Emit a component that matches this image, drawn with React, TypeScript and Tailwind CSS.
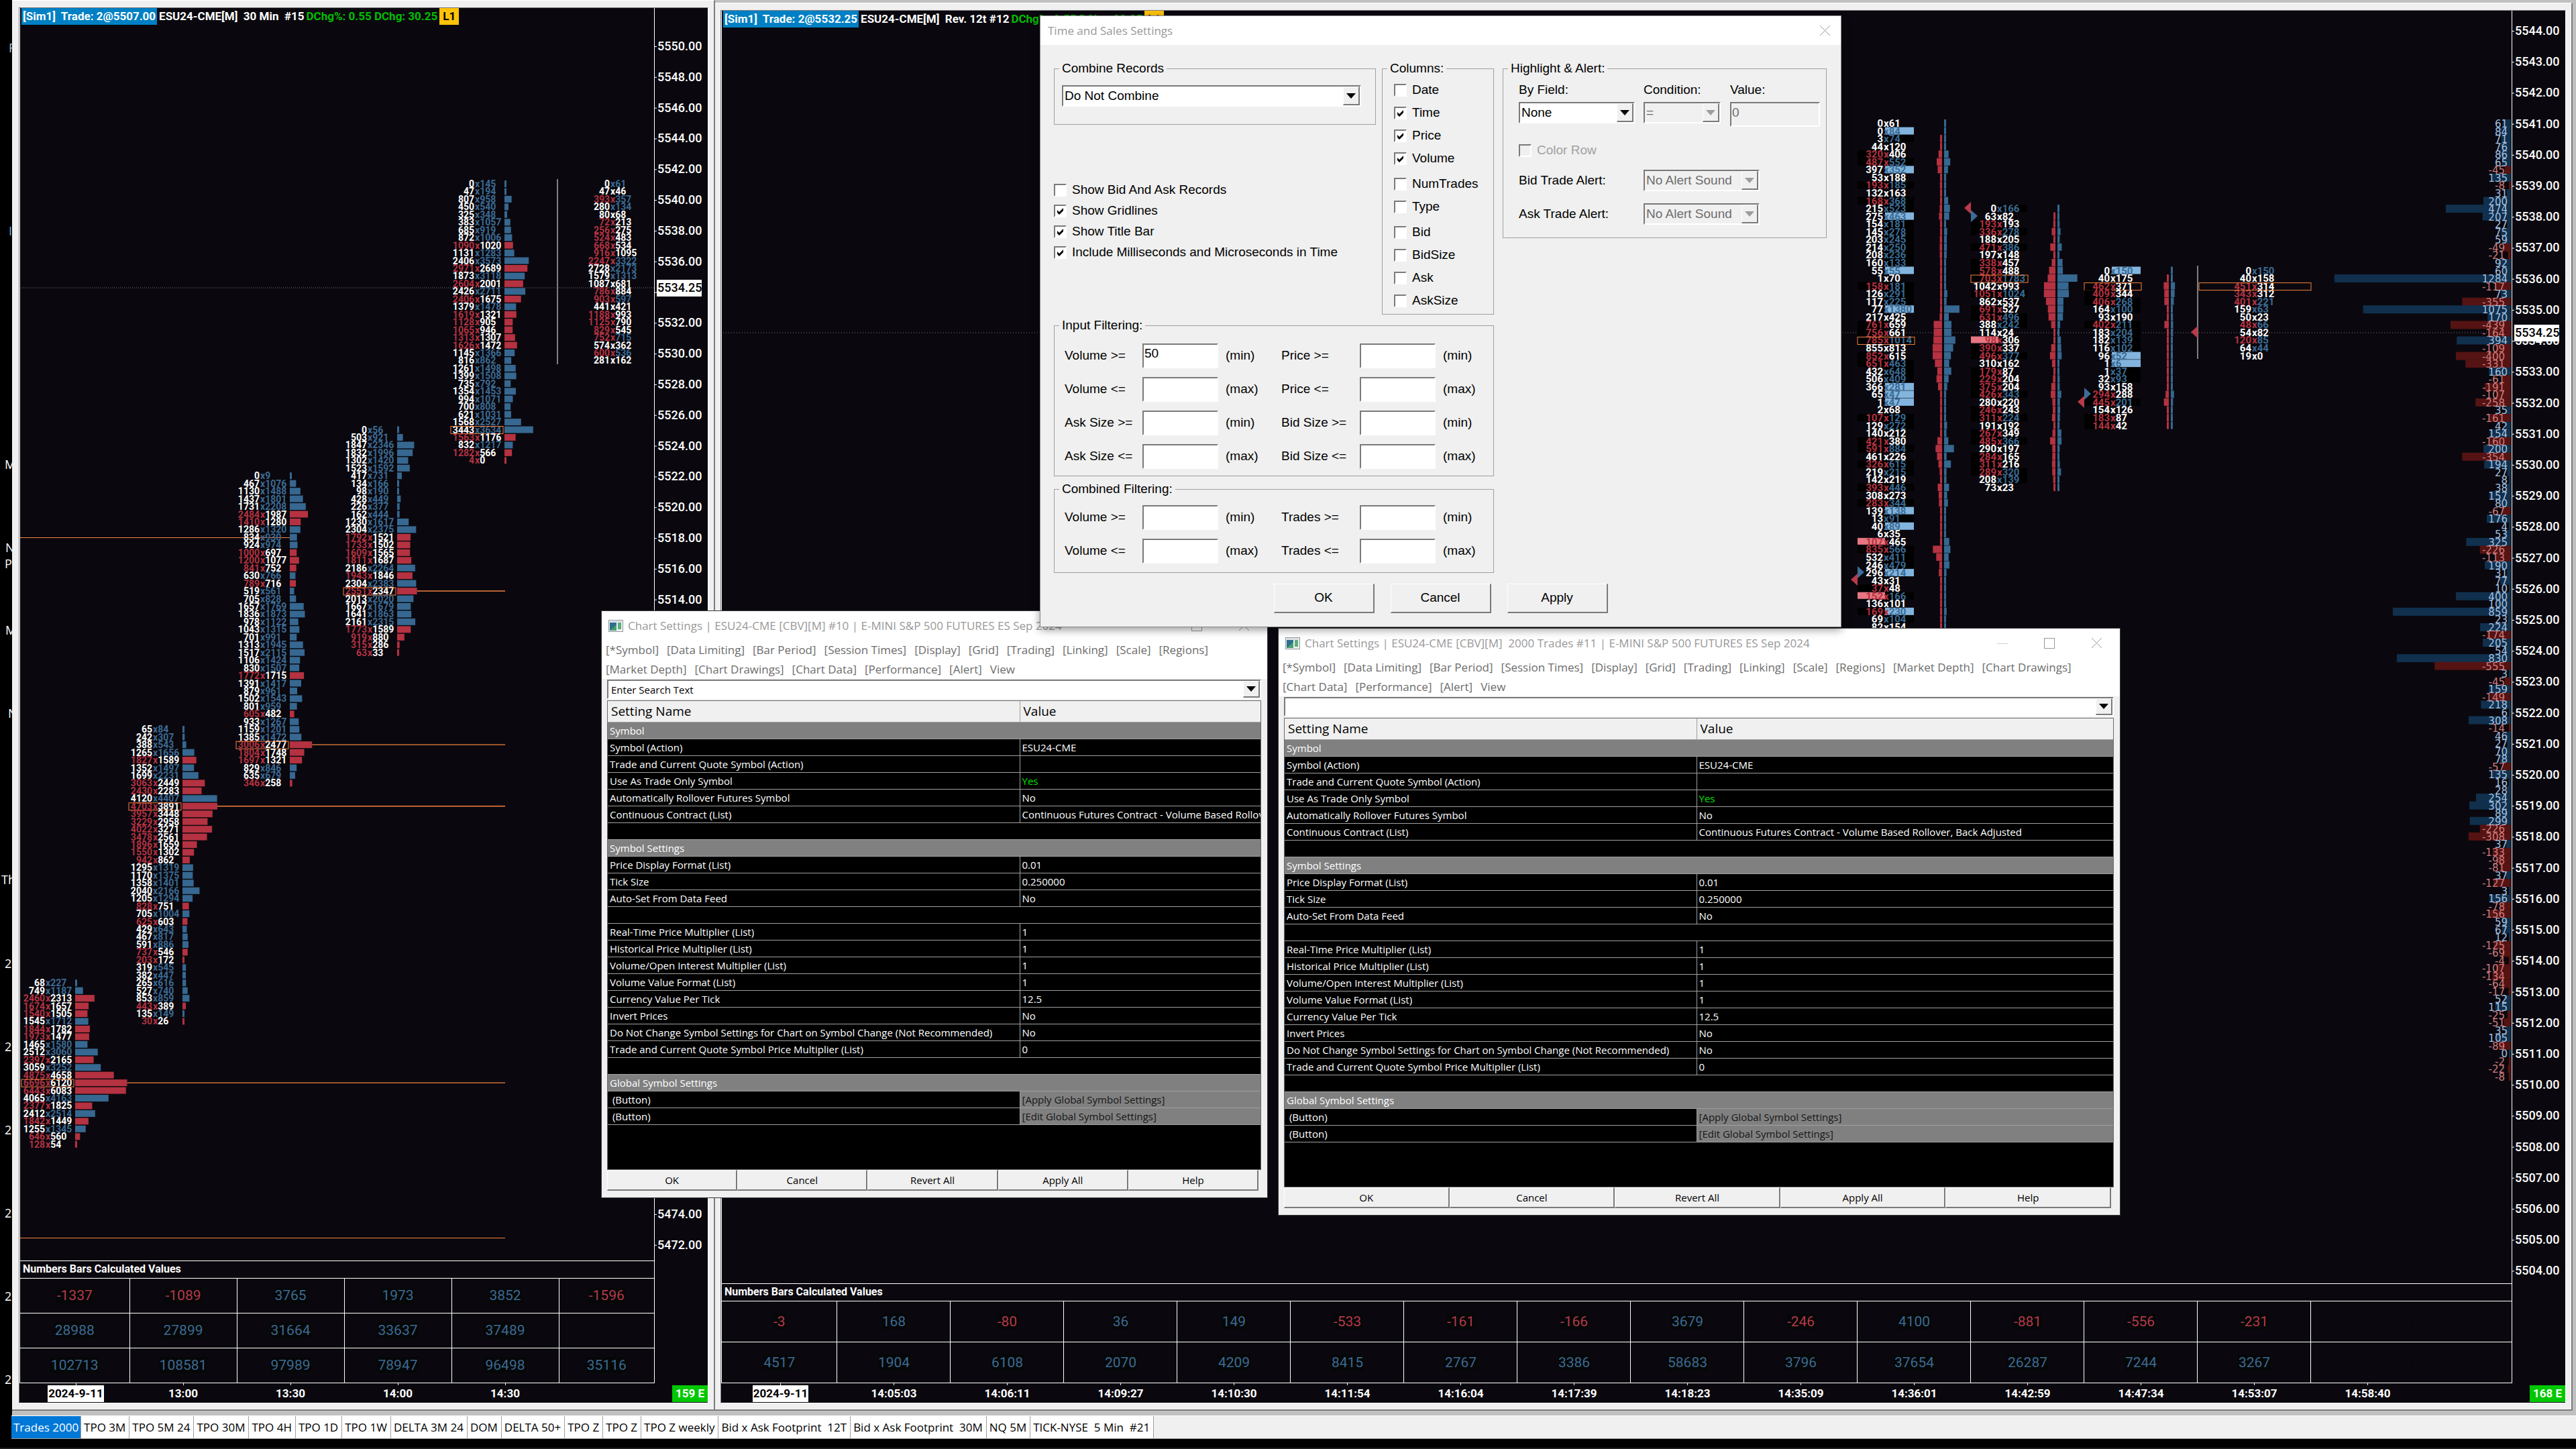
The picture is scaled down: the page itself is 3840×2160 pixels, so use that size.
import React from 'react';
import { clsx } from 'clsx';

// Row codes: w = both plain, b = ask coloured, r = bid coloured, m = both coloured,
// B / R = highlighted ask / bid, M = bid coloured + ask highlighted, N = bid highlighted + ask coloured
type Code = 'w' | 'b' | 'r' | 'm' | 'B' | 'R' | 'M' | 'N';

interface Row {
  code: Code;
  bid: number;
  ask: number;
}

interface Column {
  x: number;
  start: number;
  poc?: number;
  rows: Row[];
}

const RED = '#b43241';
const BLUE = '#3b6b94';
const ORANGE = '#f5813f';

const parseRows = (text: string): Row[] =>
  text
    .trim()
    .split(/\s+/)
    .map((item) => {
      const coded = /^[a-zA-Z]/.test(item);
      const [bid, ask] = (coded ? item.slice(1) : item).split('x').map(Number);
      const code = coded ? (item[0] as Code) : ask > bid ? 'b' : 'r';
      return { code, bid, ask };
    });

const range = (from: number, to: number, step: number) => {
  const out: number[] = [];
  for (let p = from; p >= to; p -= step) out.push(p);
  return out;
};

/* ---------- 30 minute chart ---------- */

const LEFT_PITCH = 11.454;
const LEFT_TOP = 262;
const LINE_END = 723;

const leftColumns: Column[] = [
  {
    x: 722,
    start: 0,
    poc: 32,
    rows: parseRows(`0x145 47x194 807x958 450x540 325x348 383x1057 685x919 872x1006 1090x1020 1131x1283 2406x3573
      2971x2689 1873x3118 2604x2001 2426x2711 2406x1675 1379x1478 1619x1321 1128x905 1065x946 1313x1307 1626x1472
      1145x1366 816x862 1261x1498 1399x1508 735x792 1354x1453 994x1071 700x808 621x1031 1568x2527 3443x3634
      1563x1176 832x1217 1282x566 4x0`),
  },
  {
    x: 562,
    start: 32,
    poc: 21,
    rows: parseRows(`0x56 503x921 1847x2346 1832x1996 1302x1420 1523x1592 417x731 134x166 98x190 428x449 226x377
      162x444 1230x1617 2304x2375 1792x1521 1733x1502 1609x1565 1811x1687 2186x2264 1943x1846 2304x2383 2551x2347
      2013x2020 1667x1679 1641x1863 2161x2315 1773x1589 919x880 315x286 63x33`),
  },
  {
    x: 402,
    start: 38,
    poc: 35,
    rows: parseRows(`0x9 467x1076 1130x1488 1437x1801 1731x2208 2484x1987 1410x1280 1286x1320 834x930 924x974
      1000x697 1200x1077 841x752 630x766 789x716 519x561 705x828 1657x1769 1836x1873 978x1122 1043x1315 701x991
      1313x1945 1517x2115 1106x1424 830x1507 1772x1715 1391x1417 879x961 1502x1543 801x959 605x482 933x1267
      1159x1201 1385x1472 3006x2477 1804x1748 1697x1321 829x846 635x679 346x258`),
  },
  {
    x: 242,
    start: 71,
    poc: 10,
    rows: parseRows(`65x84 242x307 388x543 1265x1656 1827x1589 1352x1497 1699x2231 3063x2449 2430x2283 4120x4407
      4703x3891 3957x3448 3229x2958 4022x3271 3478x2561 1896x1659 1550x1302 942x862 1295x1319 1170x1375 1358x1401
      2040x2166 1205x1294 828x751 705x1004 625x603 429x643 467x817 591x886 737x546 203x172 319x545 382x447 265x616
      527x740 853x859 443x389 135x149 30x26`),
  },
  {
    x: 82,
    start: 104,
    poc: 13,
    rows: parseRows(`68x227 749x1187 2460x2313 1674x1657 1540x1505 1545x1712 1844x1782 1973x1477 1465x1580
      2512x3060 2397x2165 3059x3252 4875x4658 6696x6120 6443x6083 4065x4163 2377x1825 2412x2514 1842x1449
      1255x1345 646x560 128x54`),
  },
];

const leftCurrent = parseRows(`b0x61 w47x46 m393x357 b280x134 w80x68 r72x213 r256x275 r524x483 r668x534 r916x1095
  m2247x3322 b2728x2173 b1579x1313 w1087x681 r786x884 m903x597 w441x421 r1188x993 r1125x790 r829x545 m752x715
  w574x362 m600x536 w281x162`);

/* ---------- Reversal chart ---------- */

const RIGHT_PITCH = 11.553;
const RIGHT_TOP = 168;

const rightColumns: Column[] = [
  {
    x: 1693,
    start: 0,
    poc: 28,
    rows: parseRows(`w0x61 B0x84 b3x74 w44x120 r320x406 m487x552 B397x352 w53x188 m193x185 w132x163 m168x368
      b215x523 B275x463 b154x181 b145x278 b203x245 b214x250 b208x236 b160x133 B55x55 w1x70 m158x181 b126x291
      b117x225 B77x1380 w217x425 r761x659 r756x661 m785x1014 w855x813 r852x615 m651x463 b432x648 b506x409
      B366x281 B65x47 B1x47 w2x68 m107x129 b129x272 w140x212 r421x380 m591x884 w461x226 m326x615 b219x215
      w142x219 m393x446 w308x273 m283x344 B139x138 b13x91 B40x89 w6x35 R107x465 m835x566 b532x411 b246x479
      B296x214 w43x31 r37x48 N152x166 w136x101 M169x230 b69x104 w82x154`),
  },
  {
    x: 1862,
    start: 11,
    poc: 9,
    rows: parseRows(`b0x166 w63x82 r193x193 m336x278 w188x205 m471x386 w197x148 r338x457 r578x488 m703x1783
      w1042x993 m1051x1024 w862x537 r691x527 m631x496 b388x242 w114x24 R98x306 r390x337 m496x377 w310x162
      r179x87 r229x204 r375x204 m426x343 w280x220 r246x243 m311x224 w191x192 r267x349 m485x366 w290x197
      r284x165 r311x216 m289x320 b208x139 w73x23`),
  },
  {
    x: 2031,
    start: 19,
    poc: 2,
    rows: parseRows(`B0x150 w40x175 r462x371 r409x344 m406x268 b164x100 w93x190 m402x211 b183x204 b182x139
      b116x102 B96x52 B1x6 b1x37 b32x93 w93x158 r294x288 m445x201 w154x126 r183x87 r144x42`),
  },
];

const rightCurrent = parseRows(`b0x150 w40x158 r451x314 r343x312 m401x221 b159x63 w50x23 m48x66 w54x82 m120x85
  b64x44 w19x0`);

const profile = [
  61, 84, 71, 76, 86, 65, -45, 135, -8, 31, 200, 474, 207, 27, 75, 59, -49, -21, 92, 60, 1284, -117, 73, -355, 1075,
  170, -439, -164, 394, -109, -400, -331, 160, -61, -191, -107, -258, 35, -161, 42, 154, -160, 200, -354, 194, 27, 8,
  38, 157, 80, -67, 176, 4, 53, 325, -226, -113, 190, 31, 77, 10, 400, 100, 859, 23, 224, -174, 205, 54, 830, -555, 3,
  -45, 159, -149, 218, 6, 308, -14, 46, 27, 70, 78, -57, 135, 16, 28, 254, 302, 89, 299, -226, -308, 37, -133, -98,
  -81, 37, -127, 3, 156, -78, -156, 59, 67, 12, -125, -69, -4, -107, -134, -64, -17, 52, 115, -25, -51, 35, 105, -89,
  0, -2, -22, -8,
];

const markers = [
  { x: 1693, y: 837, up: true },
  { x: 1693, y: 848, up: false },
  { x: 1862, y: 294, up: false },
  { x: 1862, y: 306, up: true },
  { x: 2031, y: 571, up: true },
  { x: 2031, y: 583, up: false },
  { x: 2200, y: 479, up: false },
];

const RowText = ({ row, x, y, size }: { row: Row; x: number; y: number; size: number }) => {
  const bidHot = 'rmRMN'.includes(row.code);
  const askHot = 'bmBMN'.includes(row.code);
  const bidFill = bidHot ? RED : '#ffffff';
  const askFill = askHot ? BLUE : '#ffffff';
  return (
    <g fontSize={size}>
      <text x={x} y={y + 5} textAnchor="end" fill={bidFill}>
        {row.bid}
      </text>
      <text x={x + 1} y={y + 5} fill={askFill}>
        <tspan fill={bidHot ? RED : askFill}>x</tspan>
        {row.ask}
      </text>
    </g>
  );
};

const LeftPlot = () => (
  <svg className="absolute inset-0 h-full w-full font-['Roboto',sans-serif] font-bold" aria-label="30 minute numbers bars">
    <line x1={2} x2="100%" y1={417} y2={417} stroke="#77777c" strokeDasharray="1 2" />
    <rect x={0} y={789} width={402} height={1} fill={ORANGE} />
    <rect x={0} y={1833} width={LINE_END} height={1} fill={ORANGE} />
    {leftColumns.map((col) =>
      col.rows.map((row, i) => {
        const y = LEFT_TOP + (col.start + i) * LEFT_PITCH;
        const width = Math.max(3, (row.bid + row.ask) * 0.00605);
        return (
          <g key={`${col.x}-${i}`}>
            <RowText row={row} x={col.x - 45} y={y} size={14} />
            <rect x={col.x} y={y - 5} width={width} height={10} fill={row.ask > row.bid ? '#366891' : RED} />
            {i === col.poc && (
              <>
                <rect x={col.x - 80} y={y - 5} width={78} height={11} fill="none" stroke={ORANGE} />
                {col.x + width < LINE_END - 45 && (
                  <line x1={col.x + width} x2={LINE_END} y1={y} y2={y} stroke={ORANGE} strokeWidth={1.4} />
                )}
              </>
            )}
          </g>
        );
      }),
    )}
    <line x1={801} x2={801} y1={255} y2={531} stroke="#7f7f7f" strokeWidth={2} />
    {leftCurrent.map((row, i) => (
      <RowText key={i} row={row} x={879} y={LEFT_TOP + i * LEFT_PITCH} size={14} />
    ))}
  </svg>
);

const RightPlot = () => (
  <>
    <svg className="absolute inset-0 h-full w-full font-['Roboto',sans-serif] font-bold" aria-label="Reversal numbers bars">
      <line x1={2} x2="100%" y1={480} y2={480} stroke="#77777c" strokeDasharray="1 3" />
      {rightColumns.map((col) =>
        col.rows.map((row, i) => {
          const y = RIGHT_TOP + (col.start + i) * RIGHT_PITCH;
          const bidWidth = row.bid ? Math.max(3, row.bid * 0.0164) : 0;
          const askWidth = row.ask ? Math.max(3, row.ask * 0.0166) : 0;
          return (
            <g key={`${col.x}-${i}`}>
              {'rmM'.includes(row.code) && <rect x={col.x} y={y - 6} width={41} height={11} fill="#000000" />}
              {'RN'.includes(row.code) && <rect x={col.x} y={y - 6} width={41} height={10} fill="#e67681" />}
              {'bmN'.includes(row.code) && <rect x={col.x + 41} y={y - 6} width={43} height={11} fill="#000000" />}
              {'BM'.includes(row.code) && <rect x={col.x + 41} y={y - 6} width={43} height={11} fill="#82b4dd" />}
              <RowText row={row} x={col.x + 38} y={y} size={15} />
              <rect x={col.x + 126 - bidWidth} y={y - 6} width={bidWidth} height={11} fill={RED} />
              <rect x={col.x + 129} y={y - 6} width={askWidth} height={11} fill="#366891" />
              {i === col.poc && <rect x={col.x} y={y - 5} width={85} height={11} fill="none" stroke={ORANGE} />}
            </g>
          );
        }),
      )}
      <line x1={2200} x2={2200} y1={380} y2={519} stroke="#7f7f7f" strokeWidth={2} />
      {rightCurrent.map((row, i) => (
        <RowText key={i} row={row} x={2280} y={RIGHT_TOP + (19 + i) * RIGHT_PITCH} size={15} />
      ))}
      <rect x={2202} y={RIGHT_TOP + 21 * RIGHT_PITCH - 5} width={167} height={11} fill="none" stroke={ORANGE} />
      {markers.map((m, i) => (
        <path
          key={i}
          d={`M${m.x} ${m.y - 9}l${m.up ? 10 : -10} 9l${m.up ? -10 : 10} 9z`}
          fill={m.up ? '#3d6d96' : '#b93a4a'}
        />
      ))}
    </svg>
    <svg className="absolute top-0 right-0 h-full w-[300px] font-['DejaVu_Sans',sans-serif]" aria-label="Delta profile">
      {profile.map((v, i) => {
        const width = Math.max(3, Math.abs(v) * 0.205);
        return (
          <rect
            key={i}
            x={299 - width}
            y={RIGHT_TOP + i * RIGHT_PITCH - 6}
            width={width}
            height={12}
            fill={v < 0 ? '#551313' : '#10304d'}
          />
        );
      })}
      {profile.map((v, i) => (
        <text
          key={i}
          x={v < 0 ? 290 : 294}
          y={RIGHT_TOP + i * RIGHT_PITCH + 6}
          textAnchor="end"
          fontSize={15}
          fill={v < 0 ? '#d17c7c' : '#a5c0e0'}
        >
          {v}
        </text>
      ))}
    </svg>
  </>
);

interface AxisProps {
  prices: number[];
  top: number;
  pitch: number;
  last: string;
  lastY: number;
}

const PriceAxis = ({ prices, top, pitch, last, lastY }: AxisProps) => (
  <div className="relative border-l border-white">
    <svg className="absolute inset-0 h-full w-full font-['Roboto',sans-serif] text-[18px] font-medium" aria-label="Price scale">
      {prices.map((p, i) => (
        <g key={p} fill="#ffffff">
          <rect x={0} y={top + i * pitch} width={3} height={1} />
          <text x={4} y={top + i * pitch + 6}>
            {p.toFixed(2)}
          </text>
        </g>
      ))}
      <rect x={3} y={lastY - 12} width={67} height={25} fill="#ffffff" />
      <text x={4} y={lastY + 6} fill="#000000">
        {last}
      </text>
    </svg>
  </div>
);

interface ChartProps {
  className?: string;
  trade: string;
  symbol: string;
  change: string;
  plot: React.ReactNode;
  axis: React.ReactNode;
  table: React.ReactNode;
  times: string[];
  timeClass: string;
  badge: string;
}

const ChartWindow = ({ className, trade, symbol, change, plot, axis, table, times, timeClass, badge }: ChartProps) => (
  <section
    className={clsx(
      "min-w-0 border-t border-r-2 border-b-2 border-t-white border-r-[#7d7d7d] border-b-[#7d7d7d] bg-[#f0f0f0] font-['Roboto',sans-serif] text-white",
      className,
    )}
  >
    <div className="flex h-full flex-col border border-t-[#7a7a7a] border-r-white border-b-white border-l-[#7a7a7a] bg-[#0a080e]">
      <div className="grid min-h-0 flex-1 grid-cols-[1fr_80px]">
        <div className="flex min-w-0 flex-col border-b border-l border-white">
          <div className="relative min-h-0 flex-1 overflow-hidden">
            {plot}
            <h2 className="relative flex h-[25px] items-center gap-[3px] pl-[2px] text-[17px] font-bold whitespace-pre">
              <span className="flex h-full items-center bg-[#0080c4] px-[2px]">{trade}</span>
              <span>{symbol}</span>
              <span className="text-[#00be00]">{change}</span>
              <span className="flex h-full items-center bg-[#ffc20a] px-[5px] text-black">L1</span>
            </h2>
          </div>
          {table}
        </div>
        {axis}
      </div>
      <div className="flex h-[29px] shrink-0 pl-1 text-[17px] font-bold">
        {times.map((t, i) => (
          <div key={t} className={clsx('flex shrink-0 flex-col items-center', timeClass)}>
            <span className="h-[3px] w-px bg-white" />
            <span className={clsx('px-px leading-[25px]', i === 0 && 'bg-white text-black')}>{t}</span>
          </div>
        ))}
        <span className="mt-[3px] ml-auto h-[25px] bg-[#00c800] px-[5px] leading-[25px] whitespace-nowrap">{badge}</span>
      </div>
    </div>
  </section>
);

interface ValuesProps {
  rows: string[][];
  colClass: string;
  firstClass: string;
  rowClass: string;
}

const ValuesTable = ({ rows, colClass, firstClass, rowClass }: ValuesProps) => (
  <table className="w-full table-fixed border-collapse border-t border-white text-center">
    <colgroup>
      {rows[0].map((_, i) => (
        <col key={i} className={i === 0 ? firstClass : i === rows[0].length - 1 ? '' : colClass} />
      ))}
    </colgroup>
    <thead>
      <tr className="h-[26px]">
        <th colSpan={rows[0].length} className="pl-1 text-left text-[16px] leading-[24px] font-bold">
          Numbers Bars Calculated Values
        </th>
      </tr>
    </thead>
    <tbody>
      {rows.map((row, r) => (
        <tr key={r} className={rowClass}>
          {row.map((v, i) => (
            <td
              key={i}
              className={clsx(
                'border-t border-white text-[21px] leading-[28px]',
                i < row.length - 1 && 'border-r',
                v.startsWith('-') ? 'text-[#b43a4a]' : 'text-[#3c6a92]',
              )}
            >
              <span className="bg-[#060708] px-px">{v}</span>
            </td>
          ))}
        </tr>
      ))}
    </tbody>
  </table>
);

/* ---------- Classic controls ---------- */

const sunken = 'border-2 border-t-[#7a7a7a] border-l-[#7a7a7a] border-r-white border-b-white';
const raised = 'border-t border-l border-r-2 border-b-2 border-t-white border-l-white border-r-[#7a7a7a] border-b-[#7a7a7a] bg-[#f0f0f0]';

const Arrow = ({ disabled }: { disabled?: boolean }) => (
  <span className={clsx('pointer-events-none absolute top-[2px] right-[2px] bottom-[2px] flex w-[25px] items-center justify-center', raised)}>
    <svg width="14" height="8" viewBox="0 0 14 8">
      <path d="M0 0h14l-7 8z" fill={disabled ? '#9d9d9d' : '#000000'} />
    </svg>
  </span>
);

interface ComboProps {
  id: string;
  value: string;
  className?: string;
  disabled?: boolean;
  label?: string;
}

const Combo = ({ id, value, className, disabled, label }: ComboProps) => (
  <div className={clsx('relative h-[32px]', className)}>
    <select
      id={id}
      aria-label={label}
      disabled={disabled}
      defaultValue={value}
      className={clsx('h-full w-full appearance-none pl-[2px] opacity-100', sunken, disabled ? 'bg-[#f0f0f0] text-[#6d6d6d]' : 'bg-white text-black')}
    >
      <option>{value}</option>
    </select>
    <Arrow disabled={disabled} />
  </div>
);

const Check = ({ label, checked, disabled, className }: { label: string; checked?: boolean; disabled?: boolean; className?: string }) => (
  <label className={clsx('flex items-center gap-2', disabled && 'text-[#a0a0a0]', className)}>
    <span className="relative size-[19px] shrink-0">
      <input
        type="checkbox"
        defaultChecked={checked}
        disabled={disabled}
        className={clsx('peer block size-full appearance-none', sunken, disabled ? 'bg-[#f0f0f0]' : 'bg-white')}
      />
      <svg className="pointer-events-none absolute inset-0 hidden peer-checked:block" viewBox="0 0 19 19">
        <path d="M5 8v4l3 3l6-6v-4l-6 6z" fill="#000000" />
      </svg>
    </span>
    {label}
  </label>
);

const Group = ({ title, className, children }: { title: string; className?: string; children: React.ReactNode }) => (
  <fieldset className={clsx('min-w-0 border border-[#a0a0a0]', className)}>
    <legend className="ml-[7px] px-1 leading-[24px]">{title}</legend>
    {children}
  </fieldset>
);

const FilterRow = ({ id, left, right, kind, value }: { id: string; left: string; right: string; kind: string; value?: string }) => (
  <div className="grid h-[50px] grid-cols-[116px_113px_94px_117px_113px_auto] items-center pl-[15px]">
    <label htmlFor={`${id}-l`}>{left}</label>
    <input id={`${id}-l`} type="text" defaultValue={value} className={clsx('h-[37px] bg-white pb-[6px] pl-px', sunken)} />
    <span className="pl-[11px]">({kind})</span>
    <label htmlFor={`${id}-r`}>{right}</label>
    <input id={`${id}-r`} type="text" className={clsx('h-[37px] bg-white pb-[6px] pl-px', sunken)} />
    <span className="pl-[11px]">({kind})</span>
  </div>
);

const CloseIcon = () => (
  <svg width="17" height="17" viewBox="0 0 17 17" stroke="#999999" fill="none">
    <path d="M1 1l15 15M16 1l-15 15" />
  </svg>
);

const TimeAndSalesDialog = () => (
  <div
    role="dialog"
    aria-label="Time and Sales Settings"
    className="absolute top-[23px] left-[1550px] flex w-[1195px] flex-col border border-[#8a8a8a] bg-[#f0f0f0] font-['Liberation_Sans',sans-serif] text-[19px] text-black shadow-[0_4px_12px_rgba(0,0,0,0.4)]"
  >
    <div className="flex h-[43px] items-center justify-between bg-white pl-[11px] font-['Open_Sans',sans-serif] text-[17px] text-[#999999]">
      Time and Sales Settings
      <button type="button" aria-label="Close" className="mr-[15px]">
        <CloseIcon />
      </button>
    </div>
    <div className="px-[20px] pt-[23px] pb-[20px]">
      <div className="flex items-start">
        <div className="w-[480px]">
          <Group title="Combine Records" className="h-[96px]">
            <Combo id="combine" label="Combine Records" value="Do Not Combine" className="mt-[13px] ml-[11px] w-[446px]" />
          </Group>
          <div className="mt-[82px]">
            <Check label="Show Bid And Ask Records" className="h-[31px]" />
            <Check label="Show Gridlines" checked className="h-[31px]" />
            <Check label="Show Title Bar" checked className="h-[31px]" />
            <Check label="Include Milliseconds and Microseconds in Time" checked className="h-[31px]" />
          </div>
        </div>
        <Group title="Columns:" className="ml-[9px] h-[379px] w-[167px]">
          <div className="mt-[3px] flex flex-col gap-1 pl-[17px]">
            {[
              ['Date', 'Time', 'Price', 'Volume'],
              ['NumTrades', 'Type'],
              ['Bid', 'BidSize', 'Ask', 'AskSize'],
            ].map((names) => (
              <div key={names[0]}>
                {names.map((name) => (
                  <Check key={name} label={name} checked={['Time', 'Price', 'Volume'].includes(name)} className="h-[34px]" />
                ))}
              </div>
            ))}
          </div>
        </Group>
        <Group title="Highlight & Alert:" className="ml-[13px] h-[265px] w-[483px]">
          <div className="pl-[23px]">
            <div className="flex items-start pt-2">
              <div className="w-[186px]">
                <label htmlFor="by-field" className="block h-[30px] leading-[24px]">
                  By Field:
                </label>
                <Combo id="by-field" value="None" className="w-[173px]" />
              </div>
              <div className="w-[129px]">
                <label htmlFor="condition" className="block h-[30px] leading-[24px]">
                  Condition:
                </label>
                <Combo id="condition" value="=" disabled className="w-[115px]" />
              </div>
              <div>
                <label htmlFor="value" className="block h-[30px] leading-[24px]">
                  Value:
                </label>
                <input id="value" type="text" defaultValue="0" disabled className={clsx('h-[37px] w-[134px] bg-[#f0f0f0] pb-[6px] pl-px text-[#6d6d6d]', sunken)} />
              </div>
            </div>
            <Check label="Color Row" disabled className="mt-[20px] h-[30px]" />
            <div className="mt-[5px]">
              {['Bid Trade Alert:', 'Ask Trade Alert:'].map((name) => (
                <div key={name} className="flex h-[50px] items-center">
                  <label htmlFor={name[0]} className="w-[186px]">
                    {name}
                  </label>
                  <Combo id={name[0]} value="No Alert Sound" disabled className="w-[173px]" />
                </div>
              ))}
            </div>
          </div>
        </Group>
      </div>
      <Group title="Input Filtering:" className="mt-1 w-[656px] pt-2 pb-1">
        <FilterRow id="vol-min" left="Volume >=" right="Price >=" kind="min" value="50" />
        <FilterRow id="vol-max" left="Volume <=" right="Price <=" kind="max" />
        <FilterRow id="size-min" left="Ask Size >=" right="Bid Size >=" kind="min" />
        <FilterRow id="size-max" left="Ask Size <=" right="Bid Size <=" kind="max" />
      </Group>
      <Group title="Combined Filtering:" className="mt-[7px] w-[656px] pt-[5px] pb-[7px]">
        <FilterRow id="comb-min" left="Volume >=" right="Trades >=" kind="min" />
        <FilterRow id="comb-max" left="Volume <=" right="Trades <=" kind="max" />
      </Group>
      <div className="mt-4 flex justify-center gap-6">
        {['OK', 'Cancel', 'Apply'].map((name) => (
          <button key={name} type="button" className={clsx('h-[44px] w-[150px]', raised)}>
            {name}
          </button>
        ))}
      </div>
    </div>
  </div>
);

/* ---------- Chart settings dialogs ---------- */

const settings: [string, string?][] = [
  ['#Symbol'],
  ['Symbol (Action)', 'ESU24-CME'],
  ['Trade and Current Quote Symbol (Action)', ''],
  ['Use As Trade Only Symbol', 'Yes'],
  ['Automatically Rollover Futures Symbol', 'No'],
  ['Continuous Contract (List)', 'Continuous Futures Contract - Volume Based Rollover, Back Adjusted'],
  [''],
  ['#Symbol Settings'],
  ['Price Display Format (List)', '0.01'],
  ['Tick Size', '0.250000'],
  ['Auto-Set From Data Feed', 'No'],
  [''],
  ['Real-Time Price Multiplier (List)', '1'],
  ['Historical Price Multiplier (List)', '1'],
  ['Volume/Open Interest Multiplier (List)', '1'],
  ['Volume Value Format (List)', '1'],
  ['Currency Value Per Tick', '12.5'],
  ['Invert Prices', 'No'],
  ['Do Not Change Symbol Settings for Chart on Symbol Change (Not Recommended)', 'No'],
  ['Trade and Current Quote Symbol Price Multiplier (List)', '0'],
  [''],
  ['#Global Symbol Settings'],
  [' (Button)', '[Apply Global Symbol Settings]'],
  [' (Button)', '[Edit Global Symbol Settings]'],
];

const menu = [
  '[*Symbol]',
  '[Data Limiting]',
  '[Bar Period]',
  '[Session Times]',
  '[Display]',
  '[Grid]',
  '[Trading]',
  '[Linking]',
  '[Scale]',
  '[Regions]',
  '[Market Depth]',
  '[Chart Drawings]',
  '[Chart Data]',
  '[Performance]',
  '[Alert]',
  'View',
];

const SettingsDialog = ({ className, title, search }: { className: string; title: string; search: string }) => (
  <div
    role="dialog"
    aria-label={title}
    className={clsx(
      "absolute flex h-[876px] flex-col overflow-hidden border border-[#3a3a3a] bg-[#f0f0f0] font-['Open_Sans',sans-serif] text-[15px] text-black",
      className,
    )}
  >
    <div className="bg-white">
      <div className="flex h-[43px] items-center text-[17px] text-[#999999]">
        <svg className="mr-[7px] ml-[10px]" width="22" height="18" viewBox="0 0 22 18">
          <rect x="0.5" y="0.5" width="21" height="17" fill="#eef1f4" stroke="#8f979f" />
          <rect x="2" y="4" width="10" height="12" fill="#2d6f8d" />
          <path d="M2 16l10-9v9z" fill="#47a06d" />
          <rect x="14" y="4" width="5" height="10" fill="#5cae7c" />
          <path d="M2 2.5h18" stroke="#c7ced6" />
        </svg>
        <span className="flex-1 whitespace-pre">{title}</span>
        <button type="button" aria-label="Minimize" className="flex w-[70px] shrink-0 justify-center">
          <svg width="16" height="16" viewBox="0 0 16 16" stroke="#cfcfcf">
            <path d="M0 8.5h16" />
          </svg>
        </button>
        <button type="button" aria-label="Maximize" className="flex w-[70px] shrink-0 justify-center">
          <svg width="16" height="16" viewBox="0 0 16 16" stroke="#999999" fill="none">
            <rect x="0.5" y="0.5" width="15" height="15" />
          </svg>
        </button>
        <button type="button" aria-label="Close" className="flex w-[70px] shrink-0 justify-center">
          <CloseIcon />
        </button>
      </div>
      <nav className="flex flex-wrap gap-x-3 pr-[60px] pl-[6px] text-[17px] leading-[29px] text-[#6d6d6d]">
        {menu.map((m) => (
          <a key={m} href="#">
            {m}
          </a>
        ))}
      </nav>
    </div>
    <div className="flex min-h-0 flex-1 flex-col pr-[9px] pb-[10px] pl-[8px]">
      <div className="relative mt-px h-[29px] shrink-0">
        <input type="text" aria-label="Search settings" defaultValue={search} className={clsx('h-full w-full bg-white pl-1', sunken)} />
        <Arrow />
      </div>
      <div className="mt-[2px] min-h-0 flex-1 overflow-hidden border border-[#696969] bg-black">
        <table className="w-full table-fixed border-collapse text-left text-white">
          <colgroup>
            <col className="w-[614px]" />
            <col />
          </colgroup>
          <thead>
            <tr className="h-[31px] bg-[#f0f0f0] text-[19px] leading-[28px] text-black">
              <th className="border-r border-[#a0a0a0] pl-[5px] font-normal">Setting Name</th>
              <th className="pl-[5px] font-normal">Value</th>
            </tr>
          </thead>
          <tbody>
            {settings.map(([name, value], i) =>
              value === undefined ? (
                <tr key={i} className={clsx('h-[25px]', name ? 'bg-[#808080]' : 'bg-black')}>
                  <td colSpan={2} className="border-t border-[#a0a0a0] pl-[3px] leading-[24px]">
                    {name.slice(1)}
                  </td>
                </tr>
              ) : (
                <tr key={i} className="h-[25px] border-y border-[#a0a0a0]">
                  <td className="border-r border-[#a0a0a0] pl-[3px] leading-[24px] whitespace-pre">{name}</td>
                  <td
                    className={clsx(
                      'overflow-hidden pl-[3px] leading-[24px] whitespace-nowrap',
                      value === 'Yes' && 'text-[#00e000]',
                      value.startsWith('[') && 'bg-[#808080] text-[#161616]',
                    )}
                  >
                    {value}
                  </td>
                </tr>
              ),
            )}
          </tbody>
        </table>
      </div>
      <div className="grid h-[31px] shrink-0 grid-cols-5 pr-1">
        {['OK', 'Cancel', 'Revert All', 'Apply All', 'Help'].map((name) => (
          <button key={name} type="button" className={raised}>
            {name}
          </button>
        ))}
      </div>
    </div>
  </div>
);

/* ---------- Page ---------- */

const edgeLetters = [
  { text: 'F', y: 71, className: 'pl-[13px] text-[#a9c8e4]' },
  { text: 'I', y: 344, className: 'pl-[13px] text-[#6db2e8]' },
  { text: 'M', y: 692, className: 'pl-[7px]' },
  { text: 'N', y: 816, className: 'pl-[8px]' },
  { text: 'P', y: 840, className: 'pl-[7px]' },
  { text: 'M', y: 939, className: 'pl-[8px]' },
  { text: 'N', y: 1063, className: 'pl-[12px]' },
  { text: 'Th', y: 1311, className: 'pl-[2px]' },
  ...[1436, 1560, 1684, 1808, 1932, 2056].map((y) => ({ text: '2', y, className: 'pl-[7px]' })),
];

const tabs = [
  'Trades 2000',
  'TPO 3M',
  'TPO 5M 24',
  'TPO 30M',
  'TPO 4H',
  'TPO 1D',
  'TPO 1W',
  'DELTA 3M 24',
  'DOM',
  'DELTA 50+',
  'TPO Z',
  'TPO Z',
  'TPO Z weekly',
  'Bid x Ask Footprint  12T',
  'Bid x Ask Footprint  30M',
  'NQ 5M',
  'TICK-NYSE  5 Min  #21',
];

const App: React.FC = () => {
  return (
    <div className="relative flex h-screen w-full flex-col overflow-hidden bg-black">
      <div className="flex min-h-0 flex-1">
        <div className="relative w-[18px] shrink-0 overflow-hidden font-['Open_Sans',sans-serif] text-[18px] leading-[24px] text-white">
          {edgeLetters.map((l) => (
            <span key={l.y} className={clsx('absolute left-0', l.className)} style={{ top: l.y - 12 }}>
              {l.text}
            </span>
          ))}
        </div>
        <main className="flex min-w-0 flex-1 bg-[#c0c0c0]">
          <ChartWindow
            className="mb-[7px] w-[27.42%] shrink-0 pt-[10px] pr-[8px] pb-[9px] pl-[10px]"
            trade="[Sim1]  Trade: 2@5507.00"
            symbol="ESU24-CME[M]  30 Min  #15"
            change="DChg%: 0.55 DChg: 30.25"
            plot={<LeftPlot />}
            axis={<PriceAxis prices={range(5550, 5472, 2)} top={57} pitch={45.814} last="5534.25" lastY={417} />}
            table={
              <ValuesTable
                firstClass="w-[163px]"
                colClass="w-[160px]"
                rowClass="h-[52px]"
                rows={[
                  ['-1337', '-1089', '3765', '1973', '3852', '-1596'],
                  ['28988', '27899', '31664', '33637', '37489', ''],
                  ['102713', '108581', '97989', '78947', '96498', '35116'],
                ]}
              />
            }
            times={['2024-9-11', '13:00', '13:30', '14:00', '14:30']}
            timeClass="w-[160px]"
            badge="159 E"
          />
          <ChartWindow
            className="mt-1 mr-[5px] mb-[7px] flex-1 pt-[10px] pr-[8px] pb-[9px] pl-[8px]"
            trade="[Sim1]  Trade: 2@5532.25"
            symbol="ESU24-CME[M]  Rev. 12t #12"
            change="DChg%: 0.55 DChg: 30.25"
            plot={<RightPlot />}
            axis={<PriceAxis prices={range(5544, 5504, 1)} top={30} pitch={46.21} last="5534.25" lastY={480} />}
            table={
              <ValuesTable
                firstClass="w-[172px]"
                colClass="w-[169px]"
                rowClass="h-[61px]"
                rows={[
                  ['-3', '168', '-80', '36', '149', '-533', '-161', '-166', '3679', '-246', '4100', '-881', '-556', '-231', ''],
                  ['4517', '1904', '6108', '2070', '4209', '8415', '2767', '3386', '58683', '3796', '37654', '26287', '7244', '3267', ''],
                ]}
              />
            }
            times={[
              '2024-9-11', '14:05:03', '14:06:11', '14:09:27', '14:10:30', '14:11:54', '14:16:04', '14:17:39',
              '14:18:23', '14:35:09', '14:36:01', '14:42:59', '14:47:34', '14:53:07', '14:58:40',
            ]}
            timeClass="w-[169px]"
            badge="168 E"
          />
        </main>
      </div>

      {/* Chartbook tabs */}
      <div className="ml-[17px] flex h-[35px] shrink-0 border-t border-b border-t-white border-b-[#a0a0a0] bg-[#f0f0f0] font-['Open_Sans',sans-serif] text-[17px] text-black">
        {tabs.map((tab, i) => (
          <button
            key={i}
            type="button"
            className={clsx('border-r border-[#a0a0a0] whitespace-pre', i === 0 ? 'bg-[#0078d7] px-[3px] text-white' : 'bg-white pr-[5px] pl-1')}
          >
            {tab}
          </button>
        ))}
      </div>
      <div className="h-[15px] shrink-0 border-b-2 border-[#1c1c1c]" />

      <SettingsDialog
        className="top-[910px] left-[896px] w-[994px]"
        title="Chart Settings | ESU24-CME [CBV][M] #10 | E-MINI S&P 500 FUTURES ES Sep 2024"
        search="Enter Search Text"
      />
      <SettingsDialog
        className="top-[936px] left-[1905px] w-[1256px]"
        title="Chart Settings | ESU24-CME [CBV][M]  2000 Trades #11 | E-MINI S&P 500 FUTURES ES Sep 2024"
        search=""
      />
      <TimeAndSalesDialog />
    </div>
  );
};

export default App;
